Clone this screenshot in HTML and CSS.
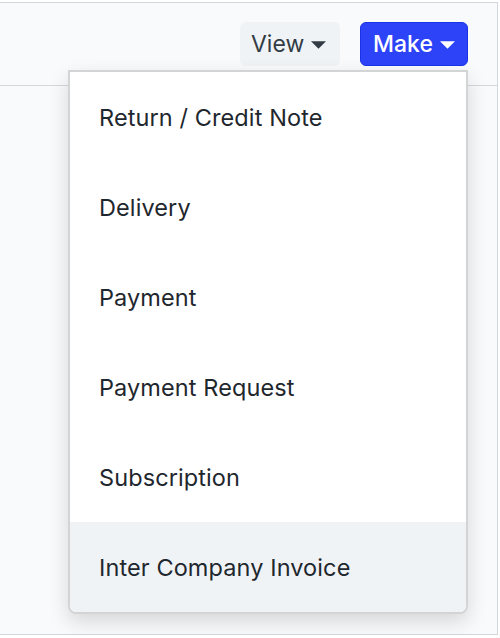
FILE: index.html
```html
<!DOCTYPE html>
<html>
<head>
<meta charset="utf-8">
<link rel="stylesheet" href="styles.css">
</head>
<body>
<div class="frame">
  <div class="header">
    <button class="btn btn-view">View <svg class="caret" viewBox="0 0 16 8" width="15" height="8"><path d="M0 0H16L8 8Z" fill="currentColor"/></svg></button>
    <button class="btn btn-make">Make <svg class="caret" viewBox="0 0 16 8" width="15" height="8"><path d="M0 0H16L8 8Z" fill="currentColor"/></svg></button>
  </div>
  <div class="menu">
    <div class="item">Return / Credit Note</div>
    <div class="item">Delivery</div>
    <div class="item">Payment</div>
    <div class="item">Payment Request</div>
    <div class="item">Subscription</div>
    <div class="item active">Inter Company Invoice</div>
  </div>
</div>
</body>
</html>
```
FILE: styles.css
```css
html, body { margin: 0; padding: 0; background: #fff; }
body { font-family: Inter, "Noto Sans", sans-serif; }
.frame {
  position: relative;
  margin-top: 2px;
  width: 497px;
  height: 631px;
  background: #f9fafb;
  border-top: 1px solid #d3d6da;
  border-right: 1px solid #d3d6da;
  border-bottom: 1px solid #d3d6da;
}
.header {
  height: 82px;
  border-bottom: 1px solid #d3d6da;
  display: flex;
  justify-content: flex-end;
  align-items: center;
  gap: 20px;
  padding-right: 29px;
}
.btn {
  height: 44px;
  border-radius: 6px;
  font-family: inherit;
  font-size: 23px;
  display: flex;
  align-items: center;
  gap: 7px;
  padding: 0 11px;
  cursor: pointer;
}
.btn-view {
  width: 100px;
  background: #f0f3f6;
  color: #333c44;
  border: none;
}
.btn-make {
  width: 108px;
  background: #2c43f8;
  color: #fff;
  border: 1px solid #1a33e8;
  font-weight: 500;
  padding: 0 12px;
}
.caret { display: block; margin-top: 1px; }
.menu {
  position: absolute;
  left: 68px;
  top: 67px;
  width: 396px;
  background: #fff;
  border: 2px solid #d3d4d6;
  border-radius: 0 0 8px 8px;
  box-shadow: 0 8px 20px rgba(0,0,0,0.14);
  overflow: hidden;
}
.item {
  height: 90px;
  display: flex;
  align-items: center;
  padding-left: 29px;
  font-size: 23.5px;
  letter-spacing: 0.1px;
  color: #1f272e;
}
.item.active { background: #f0f3f6; }
```
